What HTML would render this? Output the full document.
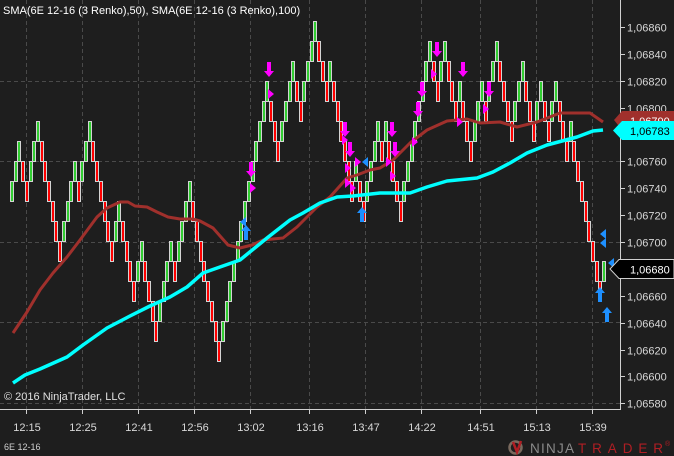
<!DOCTYPE html>
<html><head><meta charset="utf-8"><style>
html,body{margin:0;padding:0;background:#1e1e1e;}
body{width:674px;height:456px;overflow:hidden;position:relative;font-family:"Liberation Sans",Arial,sans-serif;}
svg{position:absolute;left:0;top:0;}
</style></head><body>
<svg id="s" width="674" height="456" xmlns="http://www.w3.org/2000/svg">
<rect width="674" height="456" fill="#1e1e1e"/>
<g stroke="#4a4a4a" stroke-width="1" stroke-dasharray="4,3">
<line x1="0" y1="81.5" x2="620" y2="81.5"/><line x1="0" y1="161.5" x2="620" y2="161.5"/>
<line x1="0" y1="242.5" x2="620" y2="242.5"/><line x1="0" y1="322.5" x2="620" y2="322.5"/>
<line x1="0" y1="403.5" x2="620" y2="403.5"/>
<line x1="26.5" y1="0" x2="26.5" y2="409"/><line x1="82.5" y1="0" x2="82.5" y2="409"/>
<line x1="138.5" y1="0" x2="138.5" y2="409"/><line x1="194.5" y1="0" x2="194.5" y2="409"/>
<line x1="250.5" y1="0" x2="250.5" y2="409"/><line x1="309.5" y1="0" x2="309.5" y2="409"/>
<line x1="365.5" y1="0" x2="365.5" y2="409"/><line x1="421.5" y1="0" x2="421.5" y2="409"/>
<line x1="480.5" y1="0" x2="480.5" y2="409"/><line x1="536.5" y1="0" x2="536.5" y2="409"/>
<line x1="592.5" y1="0" x2="592.5" y2="409"/>
</g>
<g id="bricks" stroke="#d4d4d4" stroke-width="1" shape-rendering="crispEdges"></g>
<polyline fill="none" stroke="#a0302c" stroke-width="3" stroke-linejoin="round" points="13,333 27,312 40,290 53,273 67,257 80,240 97,217 107,208 120,202 128,202 135,206 147,207 157,212 168,217 180,219 193,219 200,221 213,228 228,245 240,248 252,245 263,240 283,238 297,227 317,207 330,197 347,178 357,175 370,170 380,168 393,160 410,143 427,130 447,121 467,119 480,123 500,122 517,127 537,122 560,113 590,113 603,122"/>
<polyline fill="none" stroke="#00ffff" stroke-width="3.5" stroke-linejoin="round" points="13,383 25,375 40,369 67,357 83,345 107,328 130,316 150,306 170,297 187,287 203,273 220,267 240,260 267,238 290,220 303,213 320,203 337,197 353,196 380,193 410,193 427,187 447,181 477,178 493,172 510,163 527,153 547,145 577,137 593,131 603,130"/>
<g id="arrows"></g>
<line x1="620.5" y1="0" x2="620.5" y2="409" stroke="#d0d0d0"/>
<line x1="0" y1="409.5" x2="621" y2="409.5" stroke="#d0d0d0"/>
<g stroke="#d0d0d0">
<line x1="620" y1="27.5" x2="625" y2="27.5"/><line x1="620" y1="54.5" x2="625" y2="54.5"/><line x1="620" y1="81.5" x2="625" y2="81.5"/><line x1="620" y1="108.5" x2="625" y2="108.5"/><line x1="620" y1="161.5" x2="625" y2="161.5"/><line x1="620" y1="188.5" x2="625" y2="188.5"/><line x1="620" y1="215.5" x2="625" y2="215.5"/><line x1="620" y1="242.5" x2="625" y2="242.5"/><line x1="620" y1="296.5" x2="625" y2="296.5"/><line x1="620" y1="323.5" x2="625" y2="323.5"/><line x1="620" y1="350.5" x2="625" y2="350.5"/><line x1="620" y1="376.5" x2="625" y2="376.5"/><line x1="620" y1="403.5" x2="625" y2="403.5"/>
<line x1="26.5" y1="409" x2="26.5" y2="414"/><line x1="82.5" y1="409" x2="82.5" y2="414"/><line x1="138.5" y1="409" x2="138.5" y2="414"/><line x1="194.5" y1="409" x2="194.5" y2="414"/><line x1="250.5" y1="409" x2="250.5" y2="414"/><line x1="309.5" y1="409" x2="309.5" y2="414"/><line x1="365.5" y1="409" x2="365.5" y2="414"/><line x1="421.5" y1="409" x2="421.5" y2="414"/><line x1="480.5" y1="409" x2="480.5" y2="414"/><line x1="536.5" y1="409" x2="536.5" y2="414"/><line x1="592.5" y1="409" x2="592.5" y2="414"/>
</g>
<g fill="#d8d8d8" font-family="Liberation Sans, Arial, sans-serif" font-size="11">
<text x="627" y="31.5">1,06860</text><text x="627" y="58.5">1,06840</text><text x="627" y="85.5">1,06820</text><text x="627" y="112.5">1,06800</text><text x="627" y="165.5">1,06760</text><text x="627" y="192.5">1,06740</text><text x="627" y="219.5">1,06720</text><text x="627" y="246.5">1,06700</text><text x="627" y="300.5">1,06660</text><text x="627" y="327.5">1,06640</text><text x="627" y="354.5">1,06620</text><text x="627" y="380.5">1,06600</text><text x="627" y="407.5">1,06580</text>
</g>
<g fill="#d8d8d8" font-family="Liberation Sans, Arial, sans-serif" font-size="11" text-anchor="middle">
<text x="27" y="431">12:15</text><text x="83" y="431">12:25</text><text x="139" y="431">12:41</text><text x="195" y="431">12:56</text><text x="251" y="431">13:02</text><text x="310" y="431">13:16</text><text x="366" y="431">13:47</text><text x="422" y="431">14:22</text><text x="481" y="431">14:51</text><text x="537" y="431">15:13</text><text x="593" y="431">15:39</text>
</g>
<path d="M614,120 L622,111 L674,111 L674,130 L622,130 Z" fill="#a0302c"/>
<text x="630" y="125" fill="#ffffff" font-size="11" font-family="Liberation Sans, Arial, sans-serif">1,06790</text>
<path d="M613,130.5 L622,121 L674,121 L674,140 L622,140 Z" fill="#00ffff"/>
<text x="630" y="135" fill="#000" font-size="11" font-family="Liberation Sans, Arial, sans-serif">1,06783</text>
<path d="M610,269 L619,259.5 L674,259.5 L674,278.5 L619,278.5 Z" fill="#000" stroke="#d0d0d0" stroke-width="1"/>
<text x="630" y="273.5" fill="#ffffff" font-size="11" font-family="Liberation Sans, Arial, sans-serif">1,06680</text>
<text x="3" y="14" fill="#ffffff" font-size="11" font-family="Liberation Sans, Arial, sans-serif">SMA(6E 12-16 (3 Renko),50), SMA(6E 12-16 (3 Renko),100)</text>
<text x="4" y="400" fill="#e0e0e0" font-size="11" font-family="Liberation Sans, Arial, sans-serif">© 2016 NinjaTrader, LLC</text>
<text x="4" y="450" fill="#d0d0d0" font-size="9" font-family="Liberation Sans, Arial, sans-serif">6E 12-16</text>
<circle cx="515.5" cy="447.5" r="6" fill="none" stroke="#7a6a5e" stroke-width="2.5"/>
<path d="M513,442 L517,452 L521,441" fill="none" stroke="#b01e24" stroke-width="2.5"/>
<text x="530" y="453" fill="#8a8a8a" font-size="13.5" font-family="Liberation Sans, Arial, sans-serif" textLength="44" lengthAdjust="spacing">NINJA</text>
<text x="578" y="453" fill="#b01e24" font-size="13.5" font-family="Liberation Sans, Arial, sans-serif" textLength="85" lengthAdjust="spacing">TRADER</text>
<text x="665" y="446" fill="#b01e24" font-size="7" font-family="Liberation Sans, Arial, sans-serif">®</text>
</svg>
<script>
(function(){
var seq="UUUDDUUUDDDDDDUUUUDUUUDDDDDDUUDDDDUUDDDDUUUUDUUUUDDDDDDDDUUUUUUUUUUUUUDDDUUUUDDUUUUDDDUDDDDDDUDDUUUUDUDDDDUUUUUUUUDDUUDDDUDDDUUUDUUUDDDDUUUDDDUUDDUUDDDUDDDDDDDDU";
var g=document.getElementById("bricks");
var open=9,close=9,dir=0,h="";
for(var i=0;i<seq.length;i++){
 var d=seq[i]=="U"?-1:1,o;
 if(i==0){o=9;}
 else if(d==dir){o=close;} else {o=open;}
 var c=o+d;
 var x=Math.round(10+i*3.7)+0.5;
 var y=Math.round(21.3+20*Math.min(o,c))+0.5;
 h+='<rect x="'+x+'" y="'+y+'" width="3" height="20" fill="'+(d<0?"#32cd32":"#ff0000")+'"/>';
 open=o;close=c;dir=d;
}
g.innerHTML=h;
var a=document.getElementById("arrows"),s="";
function down(x,y){s+='<path d="M'+(x-2)+','+y+' h4 v9 h3 l-5,6 l-5,-6 h3 z" fill="#ff00ff"/>';}
function right(x,y){s+='<path d="M'+(x-3)+','+(y-5)+' l6,5 l-6,5 z" fill="#ff00ff"/>';}
function up(x,y){s+='<path d="M'+(x-2)+','+y+' h4 v-9 h3 l-5,-6 l-5,6 h3 z" fill="#1e90ff"/>';}
function left(x,y){s+='<path d="M'+(x+3)+','+(y-5)+' l-6,5 l6,5 z" fill="#1e90ff"/>';}
[[269,62],[251,162],[345,122],[350,142],[437,42],[422,82],[418,102],[463,62],[489,82],[392,122],[395,142]].forEach(function(p){down(p[0],p[1]);});
[[271,94],[253,188],[434,74],[486,109],[460,122],[415,142],[393,176],[389,162],[345,140],[348,168],[348,183],[353,188],[358,162]].forEach(function(p){right(p[0],p[1]);});
[[246,240],[362,222],[600,302],[607,322]].forEach(function(p){up(p[0],p[1]);});
[[243,222],[365,162],[603,234],[603,243],[611,263]].forEach(function(p){left(p[0],p[1]);});
a.innerHTML=s;
})();
</script>
</body></html>
